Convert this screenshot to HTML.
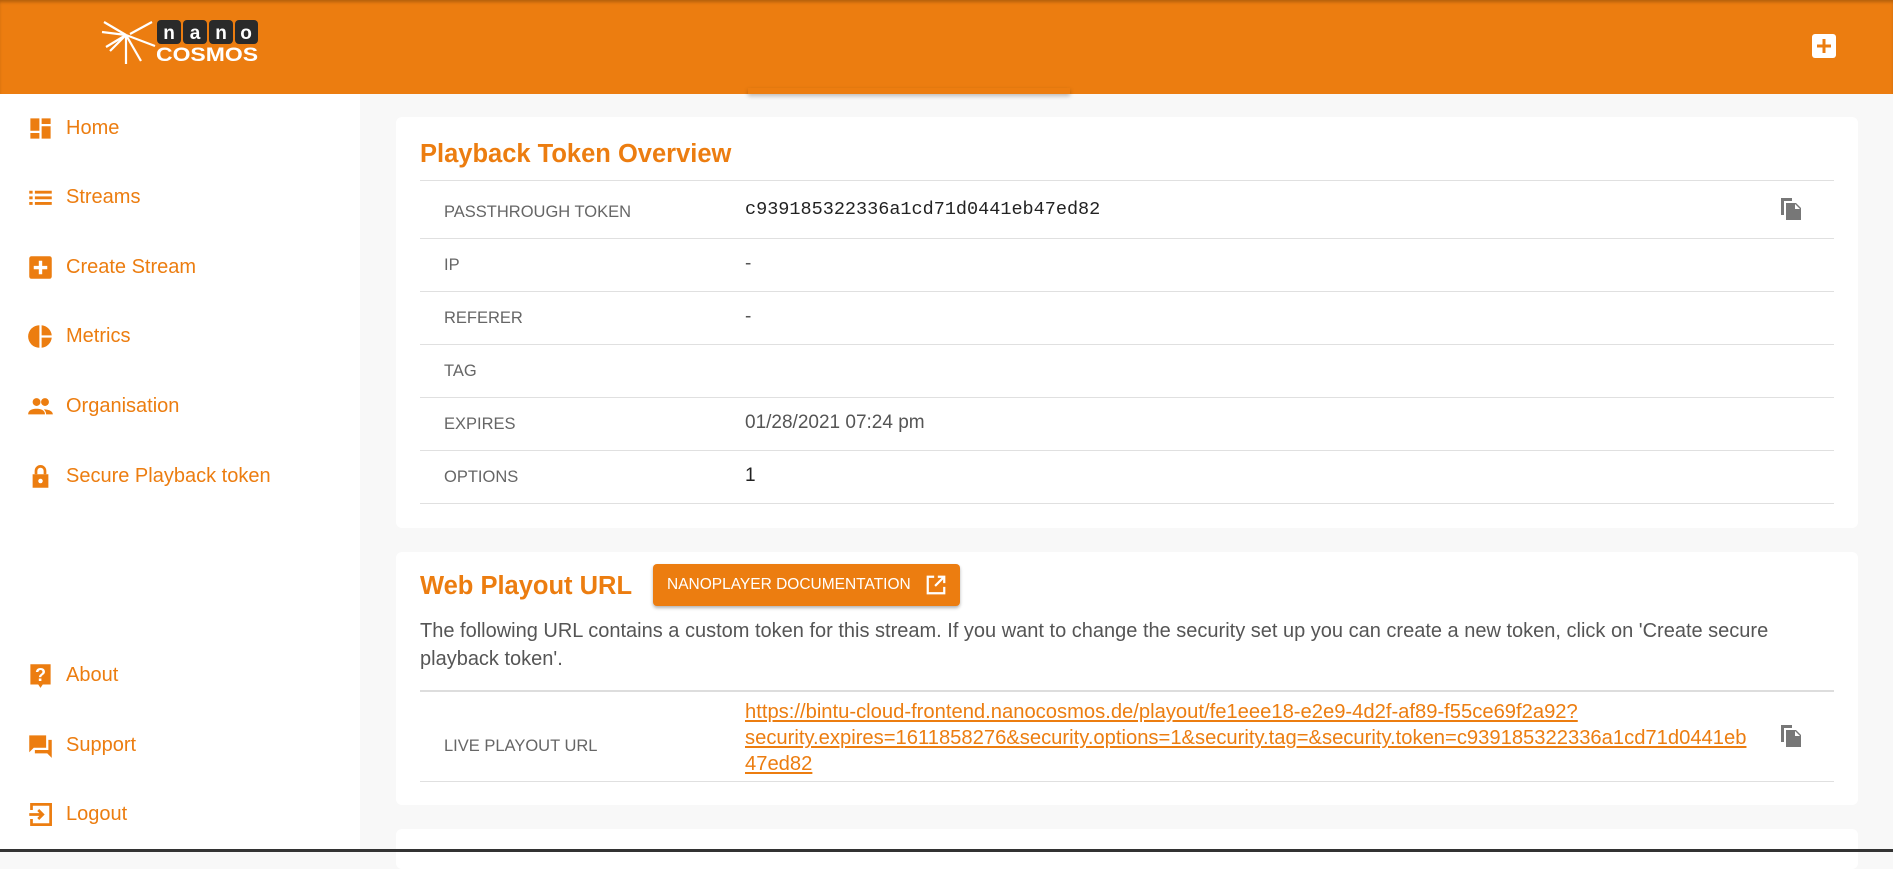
<!DOCTYPE html>
<html><head><meta charset="utf-8"><style>
*{box-sizing:border-box;margin:0;padding:0}
body{width:1893px;height:852px;overflow:hidden;background:#f8f8f8;font-family:"Liberation Sans",sans-serif;position:relative}
.hdr{position:absolute;left:0;top:0;width:1893px;height:94px;background:#ec7d10;box-shadow:inset 0 3px 3px -1px rgba(0,0,0,.25)}
.side{position:absolute;left:0;top:94px;width:360px;height:758px;background:#fff}
.nav{position:absolute;left:27px;display:flex;align-items:center;color:#ec7d10;font-size:20px}
.nav svg{width:27px;height:27px;margin-right:12px;fill:#ec7d10}
.card{position:absolute;left:396px;width:1462px;background:#fff;border-radius:6px}
h2{position:absolute;left:24px;color:#ec7d10;font-size:25.5px;font-weight:bold}
.row{position:absolute;left:24px;right:24px;border-top:1px solid #e0e0e0}
.lab{position:absolute;left:48px;color:#666;font-size:16.5px}
.val{position:absolute;left:349px;color:#555;font-size:19px}
.tab{position:absolute;left:748px;top:88px;width:322px;height:6px;background:#ec7d10;box-shadow:0 2px 4px rgba(0,0,0,.25)}
</style></head><body>
<div class="hdr">
<svg style="position:absolute;left:100px;top:18px" width="160" height="48" viewBox="0 0 160 48">
<g stroke="#fff" stroke-width="2.2" fill="none"><line x1="26" y1="17" x2="4" y2="4"/><line x1="26" y1="17" x2="2" y2="14"/><line x1="26" y1="17" x2="6" y2="29"/><line x1="26" y1="17" x2="10" y2="33"/><line x1="26" y1="17" x2="26" y2="46"/><line x1="26" y1="17" x2="41" y2="43"/><line x1="26" y1="17" x2="55" y2="28"/><line x1="30" y1="16" x2="52" y2="4"/></g>
<g fill="#2a2a2a"><rect x="57" y="2" width="24" height="24" rx="4"/><rect x="83" y="2" width="24" height="24" rx="4"/><rect x="109" y="2" width="24" height="24" rx="4"/><rect x="135" y="2" width="23" height="24" rx="4"/></g>
<g fill="#fff" font-family="Liberation Sans" font-weight="bold" font-size="19" text-anchor="middle"><text x="69" y="21">n</text><text x="95" y="21">a</text><text x="121" y="21">n</text><text x="146" y="21">o</text><text x="107" y="43" font-size="19" textLength="102" lengthAdjust="spacingAndGlyphs">COSMOS</text></g>
</svg>
<svg style="position:absolute;left:1812px;top:34px" width="24" height="24" viewBox="0 0 24 24"><rect width="24" height="24" rx="3" fill="#fff"/><path d="M12 5v14M5 12h14" stroke="#ec7d10" stroke-width="3"/></svg>
</div>
<div class="tab"></div>
<div class="side">
<div class="nav" style="top:21px"><svg viewBox="0 0 24 24"><path d="M3 3h8v11H3zM13 3h8v5h-8zM13 10h8v11h-8zM3 16h8v5H3z"/></svg>Home</div>
<div class="nav" style="top:90px"><svg viewBox="0 0 24 24"><path d="M2 6h3v2.5H2zM7 6h15v2.5H7zM2 11h3v2.5H2zM7 11h15v2.5H7zM2 16h3v2.5H2zM7 16h15v2.5H7z"/></svg>Streams</div>
<div class="nav" style="top:160px"><svg viewBox="0 0 24 24"><rect x="2" y="2" width="20" height="20" rx="2"/><path d="M12 6v12M6 12h12" stroke="#fff" stroke-width="3"/></svg>Create Stream</div>
<div class="nav" style="top:229px"><svg viewBox="0 0 24 24"><path d="M11 2v20A10 10 0 0 1 11 2zM13 2a10 10 0 0 1 9 9h-9zM13 13h9a10 10 0 0 1-9 9z"/></svg>Metrics</div>
<div class="nav" style="top:299px"><svg viewBox="0 0 24 24"><circle cx="8.5" cy="8" r="3.5"/><circle cx="16" cy="8" r="3.5"/><path d="M1 19c0-4 4-5 7.5-5s7.5 1 7.5 5zM17 19c0-2-1-3.5-2-4.5 3 0 8 1 8 4.5z"/></svg>Organisation</div>
<div class="nav" style="top:369px"><svg viewBox="0 0 24 24"><path d="M5 10h14v12H5z" /><path d="M8 10V7a4 4 0 0 1 8 0v3" stroke="#ec7d10" stroke-width="2.4" fill="none"/><circle cx="12" cy="16" r="2" fill="#fff"/></svg>Secure Playback token</div>
<div class="nav" style="top:568px"><svg viewBox="0 0 24 24"><path d="M3 2h18v18h-7l-2 3-2-3H3z"/><text x="12" y="17" font-size="16" font-weight="bold" fill="#fff" text-anchor="middle" font-family="Liberation Sans">?</text></svg>About</div>
<div class="nav" style="top:638px"><svg viewBox="0 0 24 24"><path d="M2 3h15v11H6l-4 4zM19 7h3v16l-4-4H7v-3h12z"/></svg>Support</div>
<div class="nav" style="top:707px"><svg viewBox="0 0 24 24"><path d="M4 8V3h17v18H4v-5" stroke="#ec7d10" stroke-width="2.4" fill="none"/><path d="M2 12h12M10 8l4 4-4 4" stroke="#ec7d10" stroke-width="2.4" fill="none"/></svg>Logout</div>
</div>

<div class="card" style="top:117px;height:411px">
<h2 style="top:23px">Playback Token Overview</h2>
<div class="row" style="top:63px"></div>
<div class="lab" style="top:86px">PASSTHROUGH TOKEN</div>
<div class="val" style="top:82px;font-family:'Liberation Mono',monospace;font-size:18.5px;color:#222">c939185322336a1cd71d0441eb47ed82</div>
<svg style="position:absolute;left:1384px;top:80px" width="22" height="24" viewBox="0 0 22 24"><path d="M1 1h11v3H4v14H1z" fill="#777"/><path d="M6 6h10l5 5v12H6z" fill="#777"/><path d="M15 7v5h5" fill="#fff"/></svg>
<div class="row" style="top:121px"></div>
<div class="lab" style="top:139px">IP</div><div class="val" style="top:136px">-</div>
<div class="row" style="top:174px"></div>
<div class="lab" style="top:192px">REFERER</div><div class="val" style="top:189px">-</div>
<div class="row" style="top:227px"></div>
<div class="lab" style="top:245px">TAG</div>
<div class="row" style="top:280px"></div>
<div class="lab" style="top:298px">EXPIRES</div><div class="val" style="top:295px">01/28/2021 07:24 pm</div>
<div class="row" style="top:333px"></div>
<div class="lab" style="top:351px">OPTIONS</div><div class="val" style="top:348px;color:#222">1</div>
<div class="row" style="top:386px"></div>
</div>

<div class="card" style="top:552px;height:253px">
<h2 style="top:20px">Web Playout URL</h2>
<div style="position:absolute;left:257px;top:12px;width:307px;height:42px;background:#ec7d10;border-radius:4px;box-shadow:0 2px 3px rgba(0,0,0,.3);color:#fff;font-size:15.5px;line-height:42px;padding-left:14px">NANOPLAYER DOCUMENTATION
<svg style="position:absolute;right:13px;top:10px" width="22" height="22" viewBox="0 0 24 24"><path d="M10 3H3v18h18v-7" stroke="#fff" stroke-width="2.4" fill="none"/><path d="M14 3h7v7M21 3L11 13" stroke="#fff" stroke-width="2.4" fill="none"/></svg></div>
<div style="position:absolute;left:24px;top:65px;width:1425px;color:#555;font-size:20px;line-height:28px">The following URL contains a custom token for this stream. If you want to change the security set up you can create a new token, click on 'Create secure playback token'.</div>
<div class="row" style="top:138px;border-top:2px solid #ddd"></div>
<div class="lab" style="top:185px">LIVE PLAYOUT URL</div>
<div style="position:absolute;left:349px;top:147px;color:#ec7d10;font-size:20.2px;line-height:26px;text-decoration:underline;white-space:nowrap">https://bintu-cloud-frontend.nanocosmos.de/playout/fe1eee18-e2e9-4d2f-af89-f55ce69f2a92?<br>security.expires=1611858276&amp;security.options=1&amp;security.tag=&amp;security.token=c939185322336a1cd71d0441eb<br>47ed82</div>
<svg style="position:absolute;left:1384px;top:172px" width="22" height="24" viewBox="0 0 22 24"><path d="M1 1h11v3H4v14H1z" fill="#777"/><path d="M6 6h10l5 5v12H6z" fill="#777"/><path d="M15 7v5h5" fill="#fff"/></svg>
<div class="row" style="top:229px"></div>
</div>
<div class="card" style="top:829px;height:40px"></div>
<div style="position:absolute;left:0;top:849px;width:1893px;height:3px;background:#333"></div>
</body></html>
